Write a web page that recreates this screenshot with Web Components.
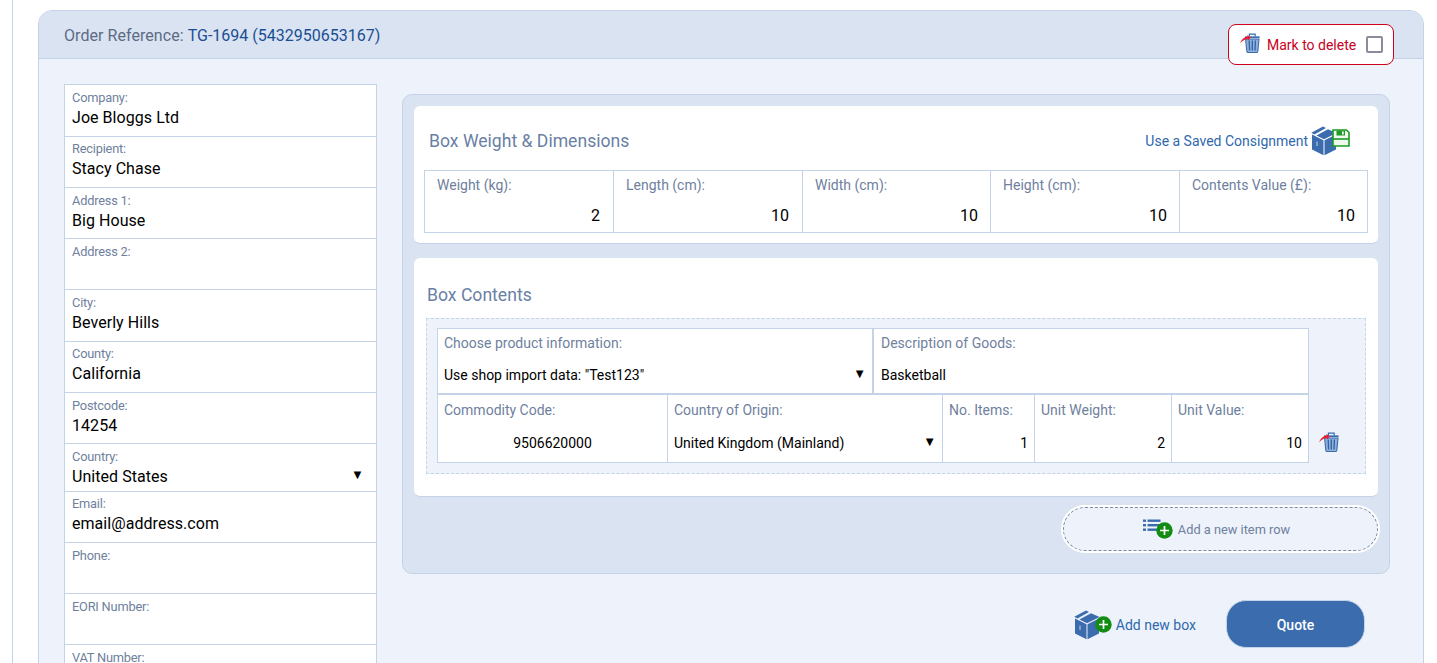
<!DOCTYPE html>
<html><head><meta charset="utf-8"><title>Order</title>
<style>
html,body{margin:0;padding:0;height:663px;overflow:hidden;background:#fff;font-family:Roboto,"Liberation Sans",sans-serif}
</style></head><body>
<order-page>
  <order-card ref="TG-1694 (5432950653167)">
    <div slot="left">
      <addr-field label="Company:" value="Joe Bloggs Ltd" h="52"></addr-field>
      <addr-field label="Recipient:" value="Stacy Chase" h="51" tight></addr-field>
      <addr-field label="Address 1:" value="Big House" h="51"></addr-field>
      <addr-field label="Address 2:" value="" h="51"></addr-field>
      <addr-field label="City:" value="Beverly Hills" h="52"></addr-field>
      <addr-field label="County:" value="California" h="51" tight></addr-field>
      <addr-field label="Postcode:" value="14254" h="51"></addr-field>
      <addr-field label="Country:" value="United States" h="48" select></addr-field>
      <addr-field label="Email:" value="email@address.com" h="51" tight></addr-field>
      <addr-field label="Phone:" value="" h="51"></addr-field>
      <addr-field label="EORI Number:" value="" h="51"></addr-field>
      <addr-field label="VAT Number:" value="" h="51"></addr-field>
    </div>
    <box-panel slot="right">
      <white-card h="138" gap="14" class="dims">
        <dim-head></dim-head>
        <dim-table></dim-table>
      </white-card>
      <white-card h="239" gap="15" class="contents">
        <contents-block></contents-block>
      </white-card>
      <add-row-button></add-row-button>
    </box-panel>
    <footer-actions slot="right-foot"></footer-actions>
  </order-card>
</order-page>
<script>
const ICONS={
 trash:`<svg width="20" height="20" viewBox="0 0 20 20"><path d="M5 4.2h14.6" stroke="#3b6cae" stroke-width="1.7" fill="none"/><path d="M9.4 3.6V1.2h5.8v2.4" stroke="#3b6cae" stroke-width="1.2" fill="none"/><path d="M5.6 6l1.2 12.2c.1.8.6 1.3 1.3 1.3h8.4c.7 0 1.2-.5 1.3-1.3L19 6z" fill="#8fb1dc" stroke="#3b6cae" stroke-width="1.1"/><path d="M9.2 7.5l.4 10M12.3 7.5v10M15.4 7.5l-.4 10" stroke="#2f62a6" stroke-width="1.3" fill="none"/><path d="M0 10.5C1.4 6.6 4 4.4 7.6 3.6L7.3 2l3.6 2.6-3 2.9-.2-1.7C5 6.2 2.600 7.700 0 10.500z" fill="#f0182a"/></svg>`,
 box:`<svg width="26" height="30" viewBox="0 0 26 30"><g fill="#3b6cae"><path d="M1 8.500l11.500 5.800v15L1 23.500z"/><path d="M13.500 14.300L25 8.500v15l-11.500 5.800z"/><path d="M.3 6.700L12 .6l3 1.500L3.400 8.400z"/><path d="M5.400 9.400L17 3.200l8.600 3.800-12.600 6.300z"/></g><path d="M6 15.500v4.500" stroke="#fff" stroke-width="1.200" opacity=".6"/></svg>`,
 floppy:`<svg width="18" height="18" viewBox="0 0 18 18"><path d="M1 1h13.500L17 3.500V17H1z" fill="#eef8ee" stroke="#1f9a26" stroke-width="1.600"/><path d="M4.500 1.500h8.500v5H4.500z" fill="#1f9a26"/><path d="M10 2.500h1.700v3H10z" fill="#fff"/><path d="M1 10h16" stroke="#1f9a26" stroke-width="1.600"/></svg>`,
 plus:`<svg width="17" height="17" viewBox="0 0 17 17"><circle cx="8.500" cy="8.500" r="8.200" fill="#128c12"/><path d="M8.500 4v9M4 8.500h9" stroke="#fff" stroke-width="1.700"/></svg>`,
 list:`<svg width="18" height="14" viewBox="0 0 18 14"><g fill="#3b6cae"><rect x="0" y=".5" width="3" height="2.400"/><rect x="4.500" y=".5" width="13" height="2.400"/><rect x="0" y="5" width="3" height="2.400"/><rect x="4.500" y="5" width="13" height="2.400"/><rect x="0" y="9.500" width="3" height="2.400"/><rect x="4.500" y="9.500" width="11" height="2.400"/></g></svg>`
};
class Base extends HTMLElement{
  constructor(){super();this.attachShadow({mode:'open'});}
  connectedCallback(){this.shadowRoot.innerHTML=this.render();}
}
function def(name,render){customElements.define(name,class extends Base{render(){return render(this)}});}

class AppIcon extends Base{render(){return `<style>:host{display:inline-flex;line-height:0}</style>${ICONS[this.getAttribute('name')]}`}}
customElements.define('app-icon',AppIcon);

def('order-page',()=>`<style>:host{display:block;margin-left:12px;border-left:1px solid #c5d3e8;height:663px;padding:10px 0 0 25px;box-sizing:border-box;width:1412px}</style><slot></slot>`);

def('mark-delete',()=>`<style>
:host{position:absolute;left:1189px;top:13px;width:166px;height:41px;box-sizing:border-box;border:1px solid #d0021b;border-radius:8px;background:#fff;display:flex;align-items:center;padding-left:11px;color:#c8001e;font-size:14px}
app-icon{margin-right:7px;margin-top:-3px}
i{width:17px;height:17px;box-sizing:border-box;border:2px solid #8b8b9c;border-radius:2px;margin-left:10px;display:block}
</style><app-icon name="trash"></app-icon><span>Mark to delete</span><i></i>`);

def('order-card',(el)=>`<style>
:host{display:block;position:relative;width:1386px;box-sizing:border-box;border:1px solid #c5d3e8;border-radius:14px 14px 0 0;background:#eef3fb;height:700px}
header{height:48px;box-sizing:border-box;background:#d9e3f1;border-bottom:1px solid #c5d3e8;border-radius:13px 13px 0 0;padding:15px 0 0 25px;font-size:16px;line-height:20px;color:#5d6b85;letter-spacing:.06px}
header b{font-weight:400;color:#1a4f94;letter-spacing:0}
main{display:grid;grid-template-columns:313px 988px;column-gap:25px;padding:25px 0 0 25px}
.r{padding-top:10px}
</style><header>Order Reference: <b>${el.getAttribute('ref')}</b></header><mark-delete></mark-delete>
<main><div><slot name="left"></slot></div><div class="r"><slot name="right"></slot><slot name="right-foot"></slot></div></main>`);

def('addr-field',(el)=>{const h=el.getAttribute('h'),sel=el.hasAttribute('select'),t=el.hasAttribute('tight');return `<style>
:host{display:block;width:313px;height:${+h}px;box-sizing:border-box;background:#fff;border:1px solid #c5d3e8;border-top:0;padding:${t?5:6}px 6px 0 7px;position:relative}
:host(:first-child){border-top:1px solid #c5d3e8;height:${+h+1}px}
.l{font-size:12.8px;line-height:14px;color:#6f7f9e;letter-spacing:-.2px}
.v{font-size:16px;line-height:20px;color:#000;margin-top:3px;display:flex;justify-content:space-between;padding-right:6px;letter-spacing:.05px}
.v i{font-style:normal;font-size:13px;line-height:16px}
</style><div class="l">${el.getAttribute('label')}</div><div class="v"><span>${el.getAttribute('value')}</span>${sel?'<i>▼</i>':''}</div>`});

def('box-panel',()=>`<style>:host{display:flex;flex-direction:column;align-items:flex-start;width:988px;height:480px;box-sizing:border-box;background:#d9e3f1;border:1px solid #c5d3e8;border-radius:10px;padding:11px 0 0 11px}</style><slot></slot>`);

def('white-card',(el)=>`<style>:host{display:block;width:964px;height:${el.getAttribute('h')}px;box-sizing:border-box;background:#fff;border-bottom:1px solid #c5d3e8;border-radius:6px;margin-bottom:${el.getAttribute('gap')}px}</style><slot></slot>`);

def('dim-head',()=>`<style>:host{display:flex;align-items:center;height:64px;padding:6px 28px 0 15px;box-sizing:border-box;justify-content:space-between}
h2{margin:0;font-weight:400;font-size:17.6px;color:#6a7fa5}
a{display:flex;align-items:center;color:#2f68ad;font-size:14px}
app-icon{margin-left:3px}.f{margin-left:-5px;margin-top:-6px}</style>
<h2>Box Weight &amp; Dimensions</h2><a><span>Use a Saved Consignment</span><app-icon name="box"></app-icon><app-icon class="f" name="floppy"></app-icon></a>`);

def('dim-table',()=>{const c=[['Weight (kg):','2',188,13],['Length (cm):','10',189,13],['Width (cm):','10',188,12],['Height (cm):','10',189,12],['Contents Value (£):','10',188,12]];
return `<style>:host{display:flex;margin-left:10px;width:944px;height:63px;box-sizing:border-box;border:1px solid #c5d3e8}
div{box-sizing:border-box;border-left:1px solid #c5d3e8;padding:4px 12px 0 12px}
div:first-of-type{border-left:0}
.l{font-size:14px;line-height:16px;color:#6f7f9e}
.v{font-size:16px;line-height:20px;color:#000;text-align:right;margin:12px 0 0}</style>`+c.map(x=>`<div style="width:${x[2]}px;padding-right:${x[3]}px"><span class="l">${x[0]}</span><p class="v">${x[1]}</p></div>`).join('')});

def('item-cell',(el)=>{const sel=el.hasAttribute('select'),al=el.getAttribute('val-align')||'left';return `<style>
:host{display:block;box-sizing:border-box;padding:6px 6px 0 6px;height:100%;border-left:1px solid #c5d3e8;background:#fff;--gap:15px}
:host([first]){border-left:0}
.l{font-size:14px;line-height:16px;color:#6f7f9e;white-space:nowrap}
.v{font-size:14px;line-height:18px;color:#000;margin-top:var(--gap);display:flex;justify-content:${al=='right'?'flex-end':al=='center'?'center':'space-between'};white-space:nowrap}
i{font-style:normal;font-size:13px;line-height:16px}
</style><div class="l">${el.getAttribute('label')}</div><div class="v"><span>${el.getAttribute('value')}</span>${sel?'<i>▼</i>':''}</div>`});

def('contents-block',()=>`<style>
:host{display:block;padding:25px 0 0 12px}
h2{margin:0 0 0 1px;font-weight:400;font-size:17.6px;line-height:24px;color:#6a7fa5}
.dash{margin-top:11px;width:940px;height:156px;box-sizing:border-box;border:1px dashed #c5d3e8;background:#eef3fb;padding:9px 10px;display:flex;align-items:flex-start}
.t{width:872px;height:135px;box-sizing:border-box;border:1px solid #c5d3e8;flex:none}
.r1{display:grid;grid-template-columns:434px 1fr;height:66px;box-sizing:border-box;border-bottom:2px solid #c5d3e8}
.r1 item-cell:nth-child(2){border-left-width:2px;padding-left:7px}
.r2{display:grid;grid-template-columns:229px 275px 92px 137px 1fr;height:67px}
.r2 item-cell{padding-top:7px;--gap:16px}
app-icon{margin:104px 0 0 10px}
</style><h2>Box Contents</h2><div class="dash"><div class="t">
<div class="r1"><item-cell first select label="Choose product information:" value='Use shop import data: "Test123"'></item-cell><item-cell label="Description of Goods:" value="Basketball"></item-cell></div>
<div class="r2"><item-cell first val-align="center" label="Commodity Code:" value="9506620000"></item-cell><item-cell select label="Country of Origin:" value="United Kingdom (Mainland)"></item-cell><item-cell val-align="right" label="No. Items:" value="1"></item-cell><item-cell val-align="right" label="Unit Weight:" value="2"></item-cell><item-cell val-align="right" label="Unit Value:" value="10"></item-cell></div>
</div><app-icon name="trash"></app-icon></div>`);

def('add-row-button',()=>`<style>
:host{display:block;align-self:flex-end;margin:-7px 9px 0 0;width:319px;height:48px;box-sizing:border-box;border:2px solid #fff;border-radius:24px;background:#eef3fb;position:relative}
div{box-sizing:border-box;height:44px;border:1px dashed #7d8aa5;border-radius:22px;display:flex;align-items:center;justify-content:center;padding-right:8px;font-size:12.8px;color:#6f7f9e}
.l{margin-top:-7px}.p{margin:3px 5px 0 -5px}
</style><div><app-icon class="l" name="list"></app-icon><app-icon class="p" name="plus"></app-icon><span>Add a new item row</span></div>`);

def('footer-actions',()=>`<style>
:host{display:flex;align-items:center;justify-content:flex-end;height:48px;margin-top:26px;width:963px}
a{display:flex;align-items:center;color:#2f68ad;font-size:14px;padding-top:1px}
.p{margin:0 4px 0 -5px;position:relative}
button{all:unset;box-sizing:border-box;width:139px;height:48px;padding-top:1px;margin-left:30px;background:#3a6cae;border:1px solid #c5d3e8;border-radius:20px;color:#fff;font-size:14px;font-weight:500;text-align:center}
</style><a><app-icon name="box"></app-icon><app-icon class="p" name="plus"></app-icon><span>Add new box</span></a><button>Quote</button>`);
</script>
</body></html>
